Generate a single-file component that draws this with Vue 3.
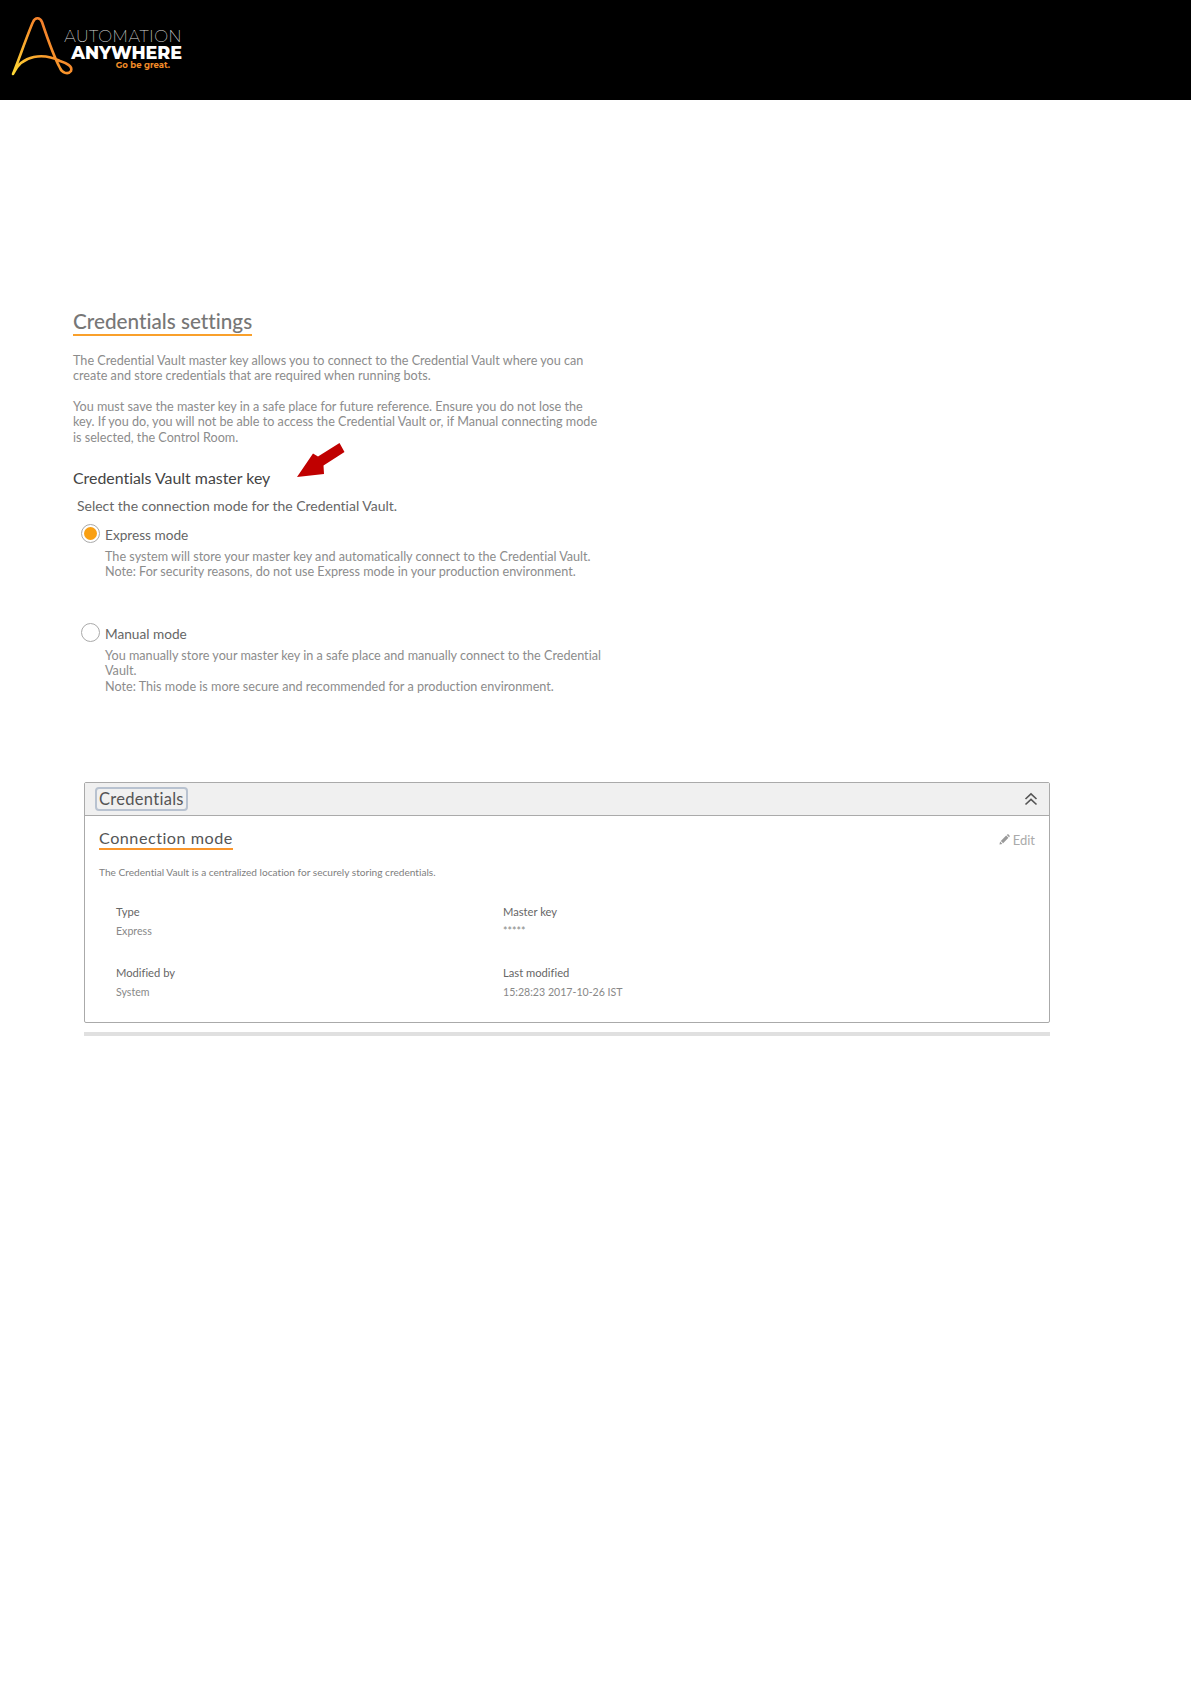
<script setup>
const fields = [
  { label: 'Type', value: 'Express' },
  { label: 'Master key', value: '*****' },
  { label: 'Modified by', value: 'System' },
  { label: 'Last modified', value: '15:28:23 2017-10-26 IST' },
]
</script>

<template>
  <div class="page">
    <header class="topbar">
      <div class="logo">
        <svg class="logo-mark" viewBox="0 0 80 80" width="80" height="80" fill="none">
          <defs>
            <linearGradient id="aa" x1="0" y1="1" x2="1" y2="0.2">
              <stop offset="0" stop-color="#fdd835" />
              <stop offset="0.55" stop-color="#f9952b" />
              <stop offset="1" stop-color="#ee6a2c" />
            </linearGradient>
          </defs>
          <path d="M13 74 C18 62 28 33 33 22 C35 17 40 17 42 22 C47 37 54 57 60 68 C62 73 68 75 71 71 C73 66 66 63 60 61 C44 53 22 54 13 74 Z" stroke="url(#aa)" stroke-width="2.600" stroke-linejoin="round" />
        </svg>
        <div class="logo-text">
          <div class="logo-top">AUTOMATION</div>
          <div class="logo-mid">ANYWHERE</div>
          <div class="logo-tag">Go be great.</div>
        </div>
      </div>
    </header>

    <main class="main">
      <h1 class="title">Credentials settings</h1>
      <p class="para first">The Credential Vault master key allows you to connect to the Credential Vault where you can<br />create and store credentials that are required when running bots.</p>
      <p class="para second">You must save the master key in a safe place for future reference. Ensure you do not lose the<br />key. If you do, you will not be able to access the Credential Vault or, if Manual connecting mode<br />is selected, the Control Room.</p>

      <div class="key-heading">
        <h2 class="subhead">Credentials Vault master key</h2>
        <svg class="arrow" viewBox="0 0 60 44" width="60" height="44">
          <polygon points="1,37 28,34 27.500,25.500 48.500,12 43.500,3 22,16.500 17,13.500" fill="#c00000" />
        </svg>
      </div>
      <p class="select">Select the connection mode for the Credential Vault.</p>

      <div class="option">
        <span class="radio on"><span class="dot"></span></span>
        <span class="option-label">Express mode</span>
      </div>
      <p class="para desc">The system will store your master key and automatically connect to the Credential Vault.<br />Note: For security reasons, do not use Express mode in your production environment.</p>

      <div class="option manual">
        <span class="radio"></span>
        <span class="option-label">Manual mode</span>
      </div>
      <p class="para desc">You manually store your master key in a safe place and manually connect to the Credential<br />Vault.<br />Note: This mode is more secure and recommended for a production environment.</p>

      <section class="panel">
        <div class="panel-head">
          <span class="panel-btn">Credentials</span>
          <svg class="chev" viewBox="0 0 14 14" width="14" height="14" fill="none" stroke="#555" stroke-width="1.600">
            <path d="M1.500 7 L7 1.800 L12.500 7" />
            <path d="M1.500 12.500 L7 7.300 L12.500 12.500" />
          </svg>
        </div>
        <div class="panel-body">
          <div class="conn-row">
            <h3 class="conn-title">Connection mode</h3>
            <span class="edit">
              <svg viewBox="0 0 12 12" width="11" height="11">
                <path d="M0.500 11.500 L1.200 8.300 L3.700 10.800 Z M2 7.500 L7.800 1.700 L10.300 4.200 L4.500 10 Z M8.500 1 L9.300 0.300 Q9.800 0 10.200 0.300 L11.600 1.800 Q12 2.200 11.600 2.700 L11 3.500 Z" fill="#999" />
              </svg>
              Edit
            </span>
          </div>
          <p class="conn-desc">The Credential Vault is a centralized location for securely storing credentials.</p>
          <div class="fields">
            <div v-for="f in fields" :key="f.label" class="field">
              <div class="f-label">{{ f.label }}</div>
              <div class="f-value">{{ f.value }}</div>
            </div>
          </div>
        </div>
      </section>
      <div class="bar"></div>
    </main>
  </div>
</template>

<style scoped>
.page {
  width: 1191px;
  height: 1684px;
  background: #fff;
  font-family: Lato, "Open Sans", sans-serif;
  font-variant-ligatures: none;
  color: #777;
  overflow: hidden;
}
.topbar {
  height: 100px;
  background: #000;
}
.logo {
  display: flex;
}
.logo-mark {
  flex: none;
}
.logo-text {
  margin-left: -16px;
  padding-top: 28px;
  width: 118px;
  text-align: right;
  font-family: Montserrat, Lato, sans-serif;
}
.logo-top {
  font-size: 16.500px;
  line-height: 17px;
  font-weight: 200;
  color: #d8d8d8;
  letter-spacing: 0.300px;
  white-space: nowrap;
}
.logo-mid {
  font-size: 17.500px;
  line-height: 15px;
  font-weight: 800;
  color: #fff;
  white-space: nowrap;
}
.logo-tag {
  font-size: 8.500px;
  line-height: 11px;
  font-weight: 700;
  color: #f28c28;
  text-align: right;
  padding-right: 12px;
  white-space: nowrap;
}
.main {
  padding: 208px 0 0 73px;
}
.title {
  display: inline-block;
  margin: 0;
  font-size: 20.700px;
  line-height: 26px;
  font-weight: 500;
  color: #777;
  border-bottom: 2px solid #f9a02b;
}
.para {
  margin: 0;
  font-size: 12.640px;
  line-height: 15.400px;
  color: #8c8c8c;
  white-space: nowrap;
}
.first {
  margin-top: 17px;
}
.second {
  margin-top: 15px;
}
.key-heading {
  display: flex;
  align-items: flex-start;
  margin-top: 22.900px;
  height: 20px;
}
.subhead {
  margin: 0;
  font-size: 15.900px;
  line-height: 20px;
  font-weight: 400;
  color: #444;
}
.arrow {
  flex: none;
  margin: -28px 0 0 26px;
}
.select {
  margin: 8px 0 0 4px;
  font-size: 13.970px;
  line-height: 20px;
  color: #666;
}
.option {
  display: flex;
  align-items: center;
  margin: 9px 0 0 8px;
  height: 20px;
}
.manual {
  margin-top: 44px;
}
.radio {
  box-sizing: border-box;
  width: 19px;
  height: 19px;
  border-radius: 50%;
  border: 1px solid #aaa;
  display: flex;
  align-items: center;
  justify-content: center;
  flex: none;
  margin-top: -3px;
}
.dot {
  width: 13px;
  height: 13px;
  border-radius: 50%;
  background: #f9a013;
}
.option-label {
  margin-left: 5px;
  font-size: 13.650px;
  color: #666;
}
.desc {
  margin: 4px 0 0 32px;
}
.panel {
  box-sizing: border-box;
  margin: 87.800px 0 0 11px;
  width: 966px;
  height: 241px;
  border: 1px solid #aaa;
  border-radius: 2px;
}
.panel-head {
  box-sizing: border-box;
  height: 33px;
  background: #f0f0f0;
  border-bottom: 1px solid #aaa;
  display: flex;
  align-items: center;
  justify-content: space-between;
  padding: 0 11px 0 10px;
}
.panel-btn {
  box-sizing: border-box;
  height: 24px;
  padding: 0 2px;
  border: 2px solid #b8c2d0;
  border-radius: 4px;
  font-size: 16.500px;
  line-height: 20px;
  color: #555;
  letter-spacing: 0.300px;
}
.panel-body {
  padding: 11px 14px 0;
}
.conn-row {
  display: flex;
  justify-content: space-between;
  align-items: flex-start;
  height: 23px;
}
.conn-title {
  margin: 0;
  font-size: 16.200px;
  line-height: 21px;
  font-weight: 400;
  color: #555;
  letter-spacing: 0.500px;
  border-bottom: 2px solid #f9952b;
}
.edit {
  display: flex;
  align-items: center;
  gap: 3px;
  font-size: 13px;
  line-height: 26px;
  color: #aaa;
}
.conn-desc {
  margin: 14px 0 0;
  font-size: 10.150px;
  line-height: 16px;
  color: #808080;
}
.fields {
  display: grid;
  grid-template-columns: 387px 1fr;
  row-gap: 24px;
  margin-top: 23px;
  padding-left: 17px;
}
.f-label {
  font-size: 11.200px;
  line-height: 18px;
  color: #666;
}
.f-value {
  margin-top: 1px;
  font-size: 10.600px;
  line-height: 18px;
  color: #888;
}
.bar {
  margin: 9px 0 0 11px;
  width: 966px;
  height: 4px;
  background: #e0e0e0;
}
</style>
